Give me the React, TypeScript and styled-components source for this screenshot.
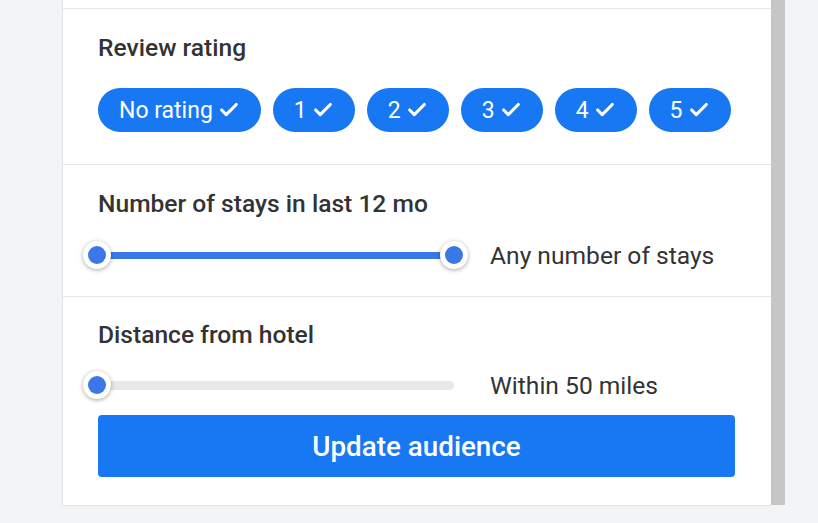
import styled, { createGlobalStyle } from 'styled-components';
import { Check } from 'lucide-react';

const GlobalStyle = createGlobalStyle`
  html, body {
    margin: 0;
    padding: 0;
    background: #f3f4f6;
    font-family: Roboto, "Liberation Sans", sans-serif;
  }
`;

const Page = styled.div`
  height: 523px;
  display: flex;
  align-items: flex-start;
  padding-left: 62px;
  box-sizing: border-box;
  overflow: hidden;
`;

const Card = styled.div`
  width: 708px;
  background: #fff;
  border-left: 1px solid #e2e3e5;
  border-bottom: 1px solid #e2e3e5;
  display: flex;
  flex-direction: column;
`;

const Scrollbar = styled.div`
  width: 14px;
  height: 505px;
  background: #c6c6c6;
`;

const Section = styled.div<{ $top: number; $bottom: number; $last?: boolean }>`
  padding: ${(p) => p.$top}px 36px ${(p) => p.$bottom}px 35px;
  border-bottom: ${(p) => (p.$last ? 'none' : '1px solid #e6e6e6')};
  display: flex;
  flex-direction: column;
`;

const TopStub = styled.div`
  height: 8px;
  border-bottom: 1px solid #e6e6e6;
`;

const Title = styled.div`
  font-size: 24.6px;
  line-height: 28px;
  font-weight: 500;
  color: #333;
`;

const Chips = styled.div`
  display: flex;
  gap: 12px;
  margin-top: 26px;
`;

const Chip = styled.button`
  height: 44px;
  padding: 0 21px;
  border: none;
  border-radius: 22px;
  background: #1877f2;
  color: #fff;
  font-family: inherit;
  font-size: 23px;
  white-space: nowrap;
  display: flex;
  align-items: center;
  gap: 5px;
`;

const SliderRow = styled.div<{ $gap: number }>`
  display: flex;
  align-items: center;
  height: 28px;
  margin-top: ${(p) => p.$gap}px;
`;

const Track = styled.div<{ $active: boolean }>`
  position: relative;
  flex: none;
  width: 356px;
  height: ${(p) => (p.$active ? 7 : 9)}px;
  border-radius: 5px;
  background: ${(p) => (p.$active ? '#3b78e7' : '#e8e8e8')};
`;

const Thumb = styled.span<{ $at: 'start' | 'end' }>`
  position: absolute;
  top: 50%;
  ${(p) => (p.$at === 'start' ? 'left: -1px;' : 'left: 100%;')}
  transform: translate(-50%, -50%);
  width: 28px;
  height: 28px;
  border-radius: 50%;
  background: #fff;
  box-shadow: 0 1px 4px rgba(0, 0, 0, 0.35);
  display: flex;
  align-items: center;
  justify-content: center;

  &::after {
    content: '';
    width: 18px;
    height: 18px;
    border-radius: 50%;
    background: #3b78e7;
  }
`;

const SliderLabel = styled.span`
  margin-left: 36px;
  font-size: 24.6px;
  color: #333;
  white-space: nowrap;
`;

const UpdateButton = styled.button`
  margin-top: 16px;
  height: 62px;
  border: none;
  border-radius: 4px;
  background: #1877f2;
  color: #fff;
  font-family: inherit;
  font-size: 27.8px;
  font-weight: 500;
`;

const ratings = ['No rating', '1', '2', '3', '4', '5'];

export default function App() {
  return (
    <>
      <GlobalStyle />
      <Page>
        <Card>
          <TopStub />
          <Section $top={25} $bottom={32}>
            <Title>Review rating</Title>
            <Chips>
              {ratings.map((r) => (
                <Chip key={r}>
                  {r}
                  <Check size={22} strokeWidth={3.4} />
                </Chip>
              ))}
            </Chips>
          </Section>
          <Section $top={25} $bottom={27}>
            <Title>Number of stays in last 12 mo</Title>
            <SliderRow $gap={23}>
              <Track $active>
                <Thumb $at="start" />
                <Thumb $at="end" />
              </Track>
              <SliderLabel>Any number of stays</SliderLabel>
            </SliderRow>
          </Section>
          <Section $top={24} $bottom={28} $last>
            <Title>Distance from hotel</Title>
            <SliderRow $gap={22}>
              <Track $active={false}>
                <Thumb $at="start" />
              </Track>
              <SliderLabel>Within 50 miles</SliderLabel>
            </SliderRow>
            <UpdateButton>Update audience</UpdateButton>
          </Section>
        </Card>
        <Scrollbar />
      </Page>
    </>
  );
}
